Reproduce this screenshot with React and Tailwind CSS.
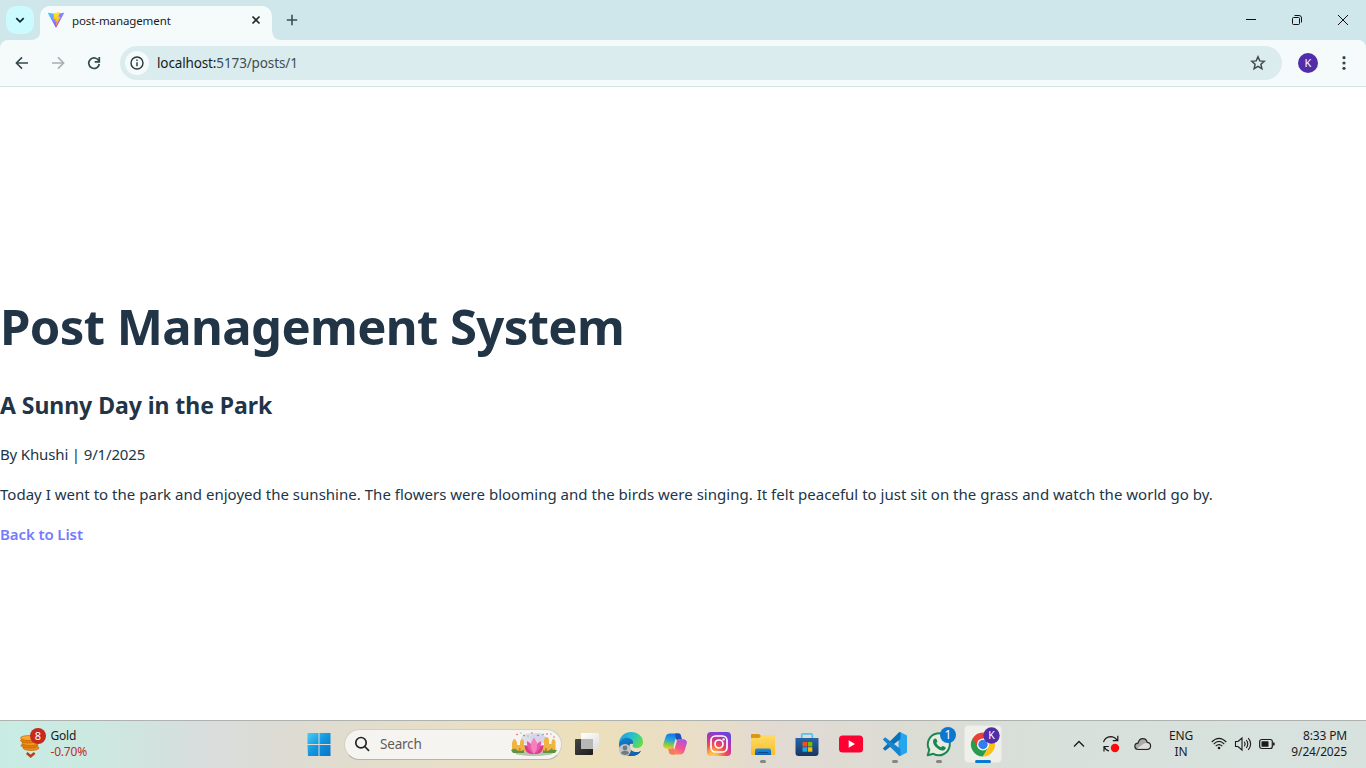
import React from "react";

const Box = ({ children, className = "" }) => (
  <div className={`flex shrink-0 items-center justify-center ${className}`}>{children}</div>
);

function ViteLogo() {
  return (
    <svg width="16" height="16" viewBox="0 0 16 16">
      <defs>
        <linearGradient id="va" x1="0" y1="0" x2=".7" y2="1">
          <stop offset="0" stopColor="#41d1ff" />
          <stop offset="1" stopColor="#bd34fe" />
        </linearGradient>
        <linearGradient id="vb" x1="0" y1="0" x2="0" y2="1">
          <stop offset="0" stopColor="#ffea3d" />
          <stop offset="1" stopColor="#ffa800" />
        </linearGradient>
      </defs>
      <path d="M15.9 1.400 8.4 15.2a.4.4 0 0 1-.8 0L0 1.400c-.1-.4.2-.7.5-.6L8 2.100l7.400-1.300c.4-.1.700.3.500.6Z" fill="url(#va)" />
      <path d="M11.500 0 6 1.100a.2.200 0 0 0-.2.200L5.500 7.200c0 .2.1.3.3.2l1.500-.3c.2 0 .3.1.3.3L7.100 9.600c0 .2.1.3.3.200l1-.3c.1 0 .3.1.200.300l-.7 3.400c0 .300.2.400.300.200l4.200-8.300c.1-.2 0-.400-.2-.300l-1.600.3c-.2 0-.3-.1-.2-.3l1.200-4.600c0-.1-.1-.3-.1-.2Z" fill="url(#vb)" />
    </svg>
  );
}

function TabStrip() {
  return (
    <div className="flex h-10 w-full bg-[#cfe7ea]">
      <div className="flex w-10 shrink-0 flex-col">
        <Box className="ml-1.5 mt-1.5 h-7 w-7 rounded-[10px] bg-[#cbfbff]">
          <svg width="12" height="12" viewBox="0 0 12 12" fill="none" stroke="#10292e" strokeWidth="1.8">
            <path d="m2.300 4.200 3.700 3.600 3.700-3.600" />
          </svg>
        </Box>
        <svg className="ml-auto mt-auto" width="10" height="6" viewBox="0 0 10 6" preserveAspectRatio="none">
          <path d="M10 0v6H0q8 0 10-6Z" fill="#f5fbfb" />
        </svg>
      </div>
      <div className="mt-1.5 flex w-[232px] shrink-0 items-center rounded-t-[10px] bg-[#f5fbfb] pb-[6px] pl-2 pr-[10px]">
        <ViteLogo />
        <span className="ml-2 mt-0.5 whitespace-nowrap text-[11.5px] leading-4 tracking-[-0.1px] text-[#171d1e]">post-management</span>
        <svg className="ml-auto" width="12" height="12" viewBox="0 0 12 12" stroke="#20282a" strokeWidth="1.7">
          <path d="m2.500 2.500 7 7m0-7-7 7" />
        </svg>
      </div>
      <svg className="mt-auto" width="10" height="10" viewBox="0 0 10 10">
        <path d="M0 0v10h10Q0 10 0 0Z" fill="#f5fbfb" />
      </svg>
      <Box className="ml-0.5 h-10 w-4">
        <svg width="12" height="12" viewBox="0 0 12 12" stroke="#3c4e51" strokeWidth="1.600">
          <path d="M6 .8v10.400M.8 6h10.400" />
        </svg>
      </Box>
      <div className="ml-auto flex">
        <Box className="h-10 w-[46px]">
          <svg width="10" height="10" viewBox="0 0 10 10" stroke="#111" shapeRendering="crispEdges"><path d="M0 4.500h10" /></svg>
        </Box>
        <Box className="h-10 w-[46px]">
          <svg width="12" height="12" viewBox="0 0 12 12" fill="none" stroke="#111">
            <rect x="1.500" y="3.500" width="7" height="7" rx="1" />
            <path d="M3.500 1.500H8Q10.500 1.500 10.500 4v4.500" />
          </svg>
        </Box>
        <Box className="h-10 w-[46px]">
          <svg width="12" height="12" viewBox="0 0 12 12" stroke="#111"><path d="m1 1 10 10M11 1 1 11" /></svg>
        </Box>
      </div>
    </div>
  );
}

function Toolbar() {
  return (
    <div className="w-full bg-[#cfe7ea]">
      <div className="flex h-[47px] items-center rounded-t-[8px] border-b border-[#d5e3e5] bg-[#f5fbfb] pl-1">
        <Box className="w-9">
          <svg width="14" height="14" viewBox="0 0 14 14" fill="none" stroke="#34494d" strokeWidth="1.600">
            <path d="M13 7H1.800M7 1.400 1.400 7 7 12.600" />
          </svg>
        </Box>
        <Box className="w-9">
          <svg width="14" height="14" viewBox="0 0 14 14" fill="none" stroke="#a5b1b3" strokeWidth="1.600">
            <path d="M1 7h11.200M7 1.400 12.600 7 7 12.600" />
          </svg>
        </Box>
        <Box className="w-9">
          <svg width="14" height="14" viewBox="0 0 14 14" fill="none" stroke="#34494d" strokeWidth="1.700">
            <path d="M11.900 5A5.300 5.300 0 1 0 12.300 8M12.300 1v4.800H7.700" />
          </svg>
        </Box>
        <div className="ml-2 flex h-[34px] w-[1162px] items-center rounded-full bg-[#dbecee] pl-[5px] pr-4">
          <Box className="h-6 w-6 rounded-full bg-[#f5fbfb]">
            <svg width="14" height="14" viewBox="0 0 14 14" fill="none" stroke="#2b3537" strokeWidth="1.400">
              <circle cx="7" cy="7" r="6" />
              <path d="M7 6.200v4M7 3.600v1.500" />
            </svg>
          </Box>
          <span className="ml-2 whitespace-nowrap text-[13.5px] leading-5 tracking-[-0.13px] text-[#3f4e51]">
            <span className="text-[#171d1e]">localhost:</span>5173/posts/1
          </span>
          <svg className="ml-auto" width="16" height="16" viewBox="0 0 16 16" fill="none" stroke="#42494c" strokeWidth="1.500">
            <path d="m8 1.800 1.800 4.100 4.500.4-3.400 3 1 4.400L8 11.400l-3.900 2.300 1-4.400-3.400-3 4.500-.4Z" />
          </svg>
        </div>
        <Box className="ml-4 h-5 w-5 rounded-full bg-[#512da8] text-[11px] leading-5 text-white">K</Box>
        <Box className="ml-4 w-5">
          <svg width="4" height="16" viewBox="0 0 4 16" fill="#34494d">
            <circle cx="2" cy="2.700" r="1.600" /><circle cx="2" cy="8" r="1.600" /><circle cx="2" cy="13.300" r="1.600" />
          </svg>
        </Box>
      </div>
    </div>
  );
}

function PostPage() {
  return (
    <main className="flex h-[633px] flex-col bg-white pt-[211px] text-[#213547]">
      <h1 className="whitespace-nowrap text-[49px] font-bold leading-[56px] tracking-[-0.6px]">Post Management System</h1>
      <h2 className="mt-[33px] whitespace-nowrap text-[23px] font-bold leading-9 tracking-[-0.05px]">A Sunny Day in the Park</h2>
      <p className="mt-[19px] whitespace-nowrap text-[15px] leading-6 tracking-[-0.15px]">By Khushi | 9/1/2025</p>
      <p className="mt-4 whitespace-nowrap text-[15px] leading-6 tracking-[0.02px]">
        Today I went to the park and enjoyed the sunshine. The flowers were blooming and the birds were singing. It felt peaceful to just sit on the grass and watch the world go by.
      </p>
      <a className="mt-4 whitespace-nowrap text-[15px] font-semibold leading-6 tracking-[-0.1px] text-[#747bff]">Back to List</a>
    </main>
  );
}

function GoldWidget() {
  return (
    <div className="flex w-[296px] shrink-0 items-center pb-0.5 pl-[19px]">
      <svg width="28" height="32" viewBox="0 0 28 32">
        <g stroke="#bb5c05" strokeWidth=".6">
          <ellipse cx="12" cy="20" rx="8" ry="2.500" fill="#f28b13" />
          <ellipse cx="10.500" cy="17.500" rx="8.500" ry="2.500" fill="#e07e0c" />
          <ellipse cx="11.500" cy="15" rx="8.500" ry="2.500" fill="#f79a1c" />
          <ellipse cx="9.500" cy="12.500" rx="8" ry="2.500" fill="#e07e0c" />
          <ellipse cx="10" cy="10" rx="8.500" ry="2.500" fill="#f9a62b" />
        </g>
        <path d="m7.800 25 3.900 3.300 3.900-3.300" fill="none" stroke="#c43c16" strokeWidth="2.500" />
        <circle cx="19" cy="8" r="8" fill="#c42b1c" />
        <text x="19" y="12" textAnchor="middle" fontSize="11" fill="#fff">8</text>
      </svg>
      <div className="ml-[3.500px] text-[12px] leading-4 text-[#1b1b1b]">
        <div className="tracking-[-0.2px]">Gold</div>
        <div className="tracking-[-0.2px] text-[#c42b1c]">-0.70%</div>
      </div>
    </div>
  );
}

function Festival() {
  return (
    <svg width="46" height="26" viewBox="0 0 46 26">
      <ellipse cx="20" cy="8" rx="10" ry="6" fill="#dedee8" />
      <ellipse cx="27" cy="8" rx="8" ry="6" fill="#d7d5ec" />
      <ellipse cx="23" cy="22" rx="19" ry="3" fill="#b9c2ad" />
      <path d="M1 20V12q1-4 2.500-4T6 12v2h3v-3q.5-3 2-3t2 3v3h3v6ZM30 20v-6h3V9q.5-3 2.500-3T38 9v4h2.500v-2q.5-3 2-3t2 3v9Z" fill="#f0b445" />
      <path d="M3 20v-2.500h1.500V20ZM8 20v-3h1.500v3ZM34 20v-3h2v3ZM40 20v-3h1.500v3Z" fill="#c98a2c" />
      <path d="M0 19q4-2 6 0t7 0v3H2Zm32 0q5 2 7-.5l7 .5-2 3H32Z" fill="#5d9440" />
      <path d="M13.500 14.500q7 0 9.500 8.500-9 1-9.500-8.500Zm19 0q-7 0-9.500 8.500 9 1 9.500-8.500Z" fill="#d93a92" />
      <path d="M16 10q7 3 7 13-8-4-7-13Zm14 0q-7 3-7 13 8-4 7-13Z" fill="#ea57a6" />
      <path d="M23 6.500q6.500 8 0 16.500-6.500-8.500 0-16.500Z" fill="#f582bf" />
      <g fill="#e84c52">
        <circle cx="6" cy="3.500" r=".8" /><circle cx="13" cy="4.500" r=".8" /><circle cx="21" cy="2" r=".7" /><circle cx="27" cy="4.500" r=".8" /><circle cx="36" cy="3" r=".8" /><circle cx="43" cy="6" r=".7" />
      </g>
      <g fill="#4b9b87"><circle cx="10" cy="2" r=".6" /><circle cx="17" cy="5" r=".6" /><circle cx="32" cy="3.500" r=".7" /><circle cx="40" cy="3" r=".6" /></g>
    </svg>
  );
}

const AppBox = ({ children, dot }) => (
  <div className="relative flex h-[47px] w-11 shrink-0 items-center justify-center pb-px pl-px">
    {children}
    {dot && <span className="absolute bottom-[5px] left-5 h-[3px] w-1.5 rounded-full bg-[#858582]" />}
  </div>
);

function TaskView() {
  return (
    <svg width="24" height="24" viewBox="0 0 24 24">
      <defs>
        <linearGradient id="ta" x1="0" y1="0" x2="1" y2="1"><stop stopColor="#454545" /><stop offset="1" stopColor="#1c1c1c" /></linearGradient>
        <linearGradient id="tb" x1="0" y1="0" x2="1" y2="1"><stop stopColor="#fff" /><stop offset="1" stopColor="#dedede" /></linearGradient>
      </defs>
      <rect x="0" y="7" width="18" height="16" rx="1" fill="url(#ta)" />
      <rect x="6" y="1" width="18" height="16" rx="1" fill="url(#tb)" />
      <path d="M6 7h12v10H6Z" fill="#b7b7b7" />
    </svg>
  );
}

function Edge() {
  return (
    <svg width="26" height="26" viewBox="0 0 26 26">
      <defs>
        <linearGradient id="ea" x1="0" y1=".2" x2="1" y2=".6"><stop stopColor="#249edb" /><stop offset=".55" stopColor="#29c5c6" /><stop offset="1" stopColor="#66dc45" /></linearGradient>
        <linearGradient id="eb" x1="0" y1="0" x2=".4" y2="1"><stop stopColor="#1686d3" /><stop offset="1" stopColor="#0b529f" /></linearGradient>
      </defs>
      <path d="M1 13C1 6 6 1 13 1s12 4.500 12 10c0 4-3 6-6.500 6-3 0-4.300-1.300-4-2.300.8-1.500 1-2 .5-3.500-2-5-12-4-14 1.800Z" fill="url(#ea)" />
      <path d="M1 13c1-5 6-7 9.500-6 3.300.8 5.500 3.300 4.500 6-4-1-5 3-2.500 5.500 2.500 3 7 3.500 10.500 1.500C21 23 17 25 13 25 6 25 1 19.500 1 13Z" fill="url(#eb)" />
      <path d="M12 14c-2 6 5 9 11 6-1.500 3-5 5-9 4.800C8 22 8 15 12 14Z" fill="#1262ad" />
      <circle cx="7" cy="19" r="6" fill="#c3c6c8" />
      <circle cx="7" cy="17" r="2.400" fill="#74797d" />
      <path d="M3 22.300q0-2.600 4-2.600t4 2.600Q7 25.500 3 22.300Z" fill="#74797d" />
    </svg>
  );
}

function Copilot() {
  return (
    <svg width="24" height="24" viewBox="0 0 24 24">
      <defs>
        <linearGradient id="ca" x1=".5" y1="0" x2=".3" y2="1"><stop stopColor="#1774e8" /><stop offset=".45" stopColor="#28a8d6" /><stop offset=".72" stopColor="#80c74d" /><stop offset="1" stopColor="#edcf24" /></linearGradient>
        <linearGradient id="cb" x1=".8" y1="0" x2=".2" y2="1"><stop stopColor="#a753ea" /><stop offset=".5" stopColor="#f3518f" /><stop offset="1" stopColor="#ff9b54" /></linearGradient>
      </defs>
      <path d="M16 7.200h4c3 0 4.500 2 3.700 4.600l-2.300 7.400c-.7 2.200-2.200 3.300-4.200 3.300H9c-1.500 0-2.500-.6-3-1.700h2c1.700 0 2.500-.8 3-2.300l2.500-8.300c.5-1.600 1-3 2.500-3Z" fill="url(#cb)" />
      <path d="M8 16.800H4c-3 0-4.500-2-3.700-4.600l2.300-7.400C3.300 2.600 4.800 1.500 6.800 1.500H15c1.500 0 2.500.6 3 1.700h-2c-1.700 0-2.500.8-3 2.300l-2.500 8.300c-.5 1.600-1 3-2.500 3Z" fill="url(#ca)" />
      <path d="M12 1.500h3c1.500 0 2.300.6 2.800 1.700l1.200 4h-3c-1.500 0-2 1.400-2.500 3Z" fill="#1d50ba" />
      <path d="M12 22.500H9c-1.500 0-2.300-.6-2.800-1.700l-1.200-4h3c1.500 0 2-1.400 2.500-3Z" fill="#f47b5b" />
      <path d="m13.200 7.500-3 9.200h1l3-9.200Z" fill="#f3e5c7" />
    </svg>
  );
}

function Instagram() {
  return (
    <svg width="24" height="24" viewBox="0 0 24 24">
      <defs>
        <radialGradient id="ia" cx=".25" cy="1.050" r="1.100"><stop stopColor="#ffdc55" /><stop offset=".2" stopColor="#fdb34b" /><stop offset=".48" stopColor="#f44c4e" /><stop offset=".72" stopColor="#c633a0" /><stop offset="1" stopColor="#6a45da" /></radialGradient>
      </defs>
      <rect width="24" height="24" rx="4" fill="url(#ia)" />
      <g fill="none" stroke="#fff" strokeWidth="1.700"><rect x="4" y="4" width="16" height="16" rx="4.500" /><circle cx="12" cy="12" r="4" /></g>
      <circle cx="16.600" cy="7.400" r="1.200" fill="#fff" />
    </svg>
  );
}

function Explorer() {
  return (
    <svg width="24" height="24" viewBox="0 0 24 24">
      <defs>
        <linearGradient id="fa" x1="0" y1="0" x2="0" y2="1"><stop stopColor="#ffdc68" /><stop offset="1" stopColor="#f7bd27" /></linearGradient>
        <linearGradient id="fb" x1="0" y1="0" x2="0" y2="1"><stop stopColor="#218cdf" /><stop offset="1" stopColor="#0d62b5" /></linearGradient>
      </defs>
      <path d="M0 2.800Q0 2 .8 2H8l2 2v5H0Z" fill="#d99717" />
      <path d="M0 6h8l3-3h12.200q.8 0 .8.800V22.200q0 .8-.8.800H.8Q0 23 0 22.200Z" fill="url(#fa)" />
      <path d="M4 23v-4.500Q4 16.500 6 16.500h12q2 0 2 2V23Z" fill="url(#fb)" />
      <path d="M7 20.500h10" stroke="#074a91" />
    </svg>
  );
}

function Store() {
  return (
    <svg width="24" height="24" viewBox="0 0 24 24">
      <defs><linearGradient id="sa" x1="0" y1="0" x2="0" y2="1"><stop stopColor="#2566a8" /><stop offset="1" stopColor="#173661" /></linearGradient></defs>
      <path d="M.5 6h23v15q0 3-3 3h-17q-3 0-3-3Z" fill="url(#sa)" />
      <path d="M6.700 6V3q0-1.200 1.200-1.200h8.200q1.200 0 1.200 1.200v3" fill="none" stroke="#4dc4f2" strokeWidth="1.700" />
      <path d="M7.500 10H12v4.500H7.500Z" fill="#f25022" /><path d="M12.800 10h4.500v4.500h-4.500Z" fill="#7fba00" />
      <path d="M7.500 15.200H12v4.500H7.500Z" fill="#19a8e8" /><path d="M12.800 15.200h4.500v4.500h-4.500Z" fill="#ffb900" />
    </svg>
  );
}

function VSCode() {
  return (
    <svg width="24" height="24" viewBox="0 0 24 24">
      <path d="m17 0 6.200 2.900q.8.400.8 1.300v15.600q0 .9-.8 1.300L17 24l-1.500-1V1Z" fill="#27a5ef" />
      <path d="M17.500 7 2.800 18.200q-.7.500-1.300 0L.3 17.100q-.6-.6 0-1.200L15.800.600Q16.300 0 17 0q.5 0 .5.800Z" fill="#0873bd" />
      <path d="M17.500 17 2.800 5.800q-.7-.5-1.300 0L.3 6.900q-.6.600 0 1.200l15.500 15.300q.5.600 1.200.600.5 0 .5-.8Z" fill="#1685cd" />
    </svg>
  );
}

function WhatsApp() {
  return (
    <svg width="34" height="34" viewBox="0 0 34 34">
      <path d="M5.700 28.300 7.300 22.800A11 11 0 1 1 11.300 26.800Z" fill="#e9ebdf" stroke="#198754" strokeWidth="2" strokeLinejoin="round" />
      <path d="M11.700 12.300c1-1.300 2.300-1.100 2.700-.2l.9 2c.3.800-.3 1.300-1 2 1.300 2.300 2.500 3.300 4.700 4.200.7-.7 1.200-1.600 2-1.300l2.200 1c.8.400.7 1.400 0 2.200-1.400 1.800-4 1.600-6.300.2-3.200-1.700-7.500-6.300-5.200-10.100Z" fill="#198754" />
      <circle cx="26" cy="8" r="8" fill="#0878d3" />
      <text x="26" y="12.300" textAnchor="middle" fontSize="12" fill="#fff">1</text>
    </svg>
  );
}

function Chrome() {
  return (
    <svg width="34" height="34" viewBox="0 0 34 34">
      <path d="M17 17.500 6.600 11.500A12 12 0 0 0 17 29.500L22.200 20.500Z" fill="#279c4b" />
      <path d="M17 11.500H27.400A12 12 0 0 1 17 29.500L22.200 20.500Z" fill="#fbc116" />
      <path d="M6.600 11.500 11.800 20.500 17 11.500h10.400A12 12 0 0 0 6.600 11.500Z" fill="#e94235" />
      <circle cx="17" cy="17.500" r="6" fill="#fff" /><circle cx="17" cy="17.500" r="4.700" fill="#337eea" />
      <circle cx="25.500" cy="8.500" r="8.200" fill="#512da8" />
      <text x="25.500" y="12.300" textAnchor="middle" fontSize="10.500" fill="#fff">K</text>
    </svg>
  );
}

function Tray() {
  return (
    <div className="ml-[59px] flex items-center pb-0.5 text-[12px] leading-4 text-[#1b1b1b]">
      <Box className="w-8">
        <svg width="12" height="12" viewBox="0 0 12 12" fill="none" stroke="#1b1b1b" strokeWidth="1.300"><path d="m1 8.500 5-5 5 5" /></svg>
      </Box>
      <Box className="w-8">
        <svg width="20" height="20" viewBox="0 0 20 20" fill="none" stroke="#1b1b1b" strokeWidth="1.200">
          <path d="M2.500 8.200Q4 3 9.500 2.700q4 0 6.500 3.500M16.800 1.800v4.900h-5M7.800 12.500H3v5M3 12.500Q4.500 16 8 17" />
          <circle cx="14" cy="14" r="4.200" fill="#fa0b0b" stroke="none" />
        </svg>
      </Box>
      <Box className="w-8">
        <svg width="18" height="14" viewBox="0 0 18 14">
          <path d="M4.300 12.300C-.2 12.300-.2 6.500 4 6.200 5.500 0 12 .4 13.200 5.300c4.500.3 4.600 7-.2 7Z" fill="#aaa" stroke="#242424" strokeWidth="1.200" />
          <path d="M3 11.500Q7 8.500 9 7.300 13 4.700 15.700 7.800 16.400 11.600 13 11.700H4Z" fill="#dedede" />
        </svg>
      </Box>
      <div className="w-11 text-center tracking-[-0.2px]"><div>ENG</div><div>IN</div></div>
      <Box className="ml-1 w-6">
        <svg width="16" height="14" viewBox="0 0 16 14" fill="none" stroke="#1b1b1b" strokeWidth="1.100">
          <path d="M.7 5Q8-2.200 15.300 5M2.700 7.100Q8 1.800 13.300 7.100M4.700 9.200Q8 5.900 11.300 9.200" /><circle cx="8" cy="11" r="1.300" fill="#1b1b1b" stroke="none" />
        </svg>
      </Box>
      <Box className="w-6">
        <svg width="18" height="16" viewBox="0 0 18 16" fill="none" stroke="#1b1b1b" strokeWidth="1.100">
          <path d="M1.500 5.500H4L8 2v12L4 10.500H1.500ZM10.300 5.800q1.500 2.200 0 4.400M12.300 4q3 4 0 8M14.300 2.200q4.700 5.800 0 11.600" />
        </svg>
      </Box>
      <Box className="w-6">
        <svg width="16" height="12" viewBox="0 0 16 12" fill="none" stroke="#1b1b1b" strokeWidth="1.200">
          <rect x=".7" y="1.500" width="12.600" height="9" rx="2" /><rect x="2.500" y="3.200" width="7" height="5.600" rx=".5" fill="#1b1b1b" stroke="none" /><path d="M14.800 4.500v3" strokeWidth="1.600" />
        </svg>
      </Box>
      <div className="ml-auto pr-[19px] text-right tracking-[-0.150px]"><div>8:33 PM</div><div>9/24/2025</div></div>
    </div>
  );
}

function Taskbar() {
  return (
    <div className="flex h-12 w-full border-t border-[#aeb3af] bg-[linear-gradient(90deg,#c8ece4_0px,#cbe9e1_90px,#d8dddd_205px,#dedbd1_300px,#e8dfc6_470px,#ecdfba_590px,#e9dec6_690px,#e1dad3_780px,#dcdcd3_900px,#d8e0da_1040px,#d7e2df_1366px)]">
      <GoldWidget />
      <AppBox>
        <svg width="24" height="24" viewBox="0 0 24 24">
          <defs><linearGradient id="wa" gradientUnits="userSpaceOnUse" x1="0" y1="0" x2="24" y2="24"><stop stopColor="#4cd0f8" /><stop offset=".5" stopColor="#1296df" /><stop offset="1" stopColor="#0873c7" /></linearGradient></defs>
          <path d="M1 1h10.500v11H.5V1ZM12.500 1h11v11h-11ZM.5 13h11v11H1ZM12.500 13h11v11h-11Z" fill="url(#wa)" />
        </svg>
      </AppBox>
      <div className="ml-[3.500px] mr-[2.500px] mt-2 flex h-[31px] w-[218px] shrink-0 items-center rounded-full border border-[#d2cec4] border-b-[#b7b3aa] bg-[#f6f4f0] pb-px pl-[9.500px] pr-[4px]">
        <svg width="16" height="16" viewBox="0 0 16 16" fill="none" stroke="#242424" strokeWidth="1.700"><circle cx="7" cy="6.700" r="5.200" /><path d="m10.800 10.500 4.200 4.300" /></svg>
        <span className="ml-[10px] text-[13.500px] leading-5 tracking-[-0.200px] text-[#5d5c5a]">Search</span>
        <div className="ml-auto"><Festival /></div>
      </div>
      <AppBox><TaskView /></AppBox>
      <AppBox><Edge /></AppBox>
      <AppBox><Copilot /></AppBox>
      <AppBox><Instagram /></AppBox>
      <AppBox dot><Explorer /></AppBox>
      <AppBox><Store /></AppBox>
      <AppBox>
        <svg width="24" height="18" viewBox="0 0 24 18"><rect width="24" height="17" y=".5" rx="3.500" fill="#ff0033" /><path d="M9.700 5.300v7.400L16 9Z" fill="#fff" /></svg>
      </AppBox>
      <AppBox dot><VSCode /></AppBox>
      <AppBox dot><WhatsApp /></AppBox>
      <div className="relative flex h-[47px] w-11 shrink-0 items-center justify-center pb-px pl-px">
        <Box className="h-[38px] w-[38px] rounded-[4px] border border-[#e3e5de] bg-[#f0f0eb]"><Chrome /></Box>
        <span className="absolute bottom-[5px] left-[15px] h-[3px] w-4 rounded-full bg-[#0878d3]" />
      </div>
      <div className="flex flex-1 [&>div]:flex-1"><Tray /></div>
    </div>
  );
}

export default function App() {
  return (
    <div className="h-[768px] w-[1366px] overflow-hidden bg-white font-['Noto_Sans',sans-serif]">
      <TabStrip />
      <Toolbar />
      <PostPage />
      <Taskbar />
    </div>
  );
}
